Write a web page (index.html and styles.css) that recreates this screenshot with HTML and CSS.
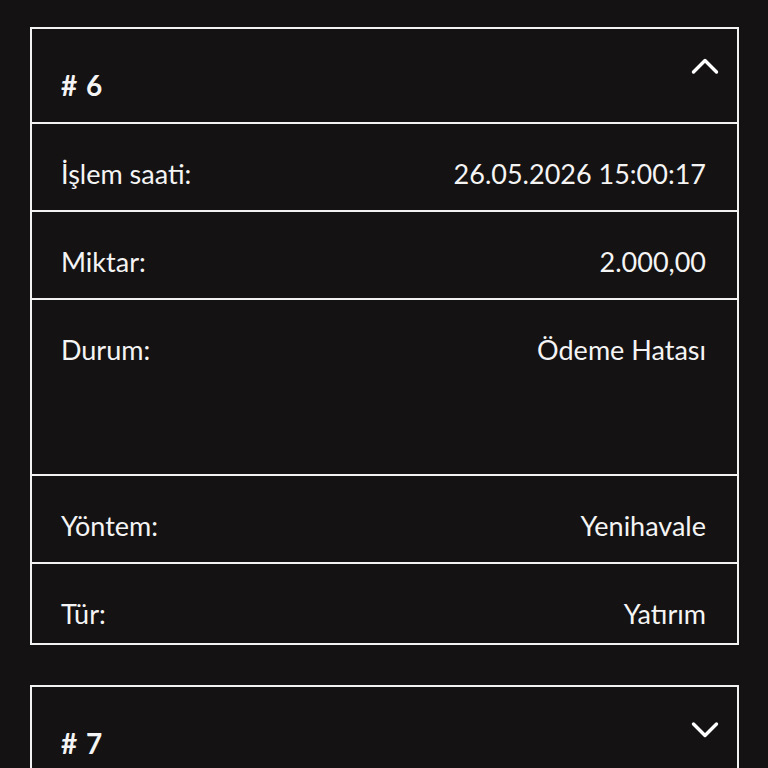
FILE: index.html
```html
<!DOCTYPE html>
<html lang="tr">
<head>
  <meta charset="UTF-8">
  <meta name="viewport" content="width=device-width, initial-scale=1.0">
  <title>İşlemler</title>
  <link rel="stylesheet" href="styles.css">
</head>
<body>

<main class="list">
  <section class="card open">
    <div class="card-head">
      <span class="card-title"># 6</span>
      <svg class="chevron chevron-up" width="28" height="18" viewBox="0 0 28 18">
        <path d="M2.5 15 L14 3.5 L25.5 15" fill="none" stroke="#fff" stroke-width="3.4" stroke-linecap="round" stroke-linejoin="round"/>
      </svg>
    </div>
    <div class="row"><span>İşlem saati:</span><span>26.05.2026 15:00:17</span></div>
    <div class="row"><span>Miktar:</span><span>2.000,00</span></div>
    <div class="row row-tall"><span>Durum:</span><span>Ödeme Hatası</span></div>
    <div class="row"><span>Yöntem:</span><span>Yenihavale</span></div>
    <div class="row row-last"><span>Tür:</span><span>Yatırım</span></div>
  </section>

  <section class="card">
    <div class="card-head">
      <span class="card-title"># 7</span>
      <svg class="chevron chevron-down" width="28" height="18" viewBox="0 0 28 18">
        <path d="M2.5 3 L14 14.5 L25.5 3" fill="none" stroke="#fff" stroke-width="3.4" stroke-linecap="round" stroke-linejoin="round"/>
      </svg>
    </div>
  </section>
</main>

</body>
</html>
```

FILE: styles.css
```css
body {
  margin: 0;
  padding: 0;
  background: #141212;
  color: #f4f4f4;
  font-family: Lato, "Open Sans", sans-serif;
  font-size: 27px;
  height: 768px;
  overflow: hidden;
}
.list {
  padding: 27px 29px 0 30px;
}
.card {
  border: 2px solid #f2f2f2;
  margin-bottom: 40px;
}
.card-head {
  height: 93px;
  display: flex;
  justify-content: space-between;
  align-items: flex-start;
  padding: 0 18px 0 29px;
}
.card-title {
  font-weight: bold;
  font-size: 28px;
  word-spacing: 2px;
  margin-top: 42px;
  line-height: 28px;
}
.chevron-up {
  margin-top: 28px;
}
.chevron-down {
  margin-top: 34px;
}
.row {
  border-top: 2px solid #f2f2f2;
  height: 86px;
  display: flex;
  justify-content: space-between;
  align-items: flex-start;
  padding: 0 31px 0 29px;
  line-height: 28px;
}
.row span {
  margin-top: 36px;
}
.row-tall {
  height: 174px;
}
.row-last {
  height: 79px;
}
```
